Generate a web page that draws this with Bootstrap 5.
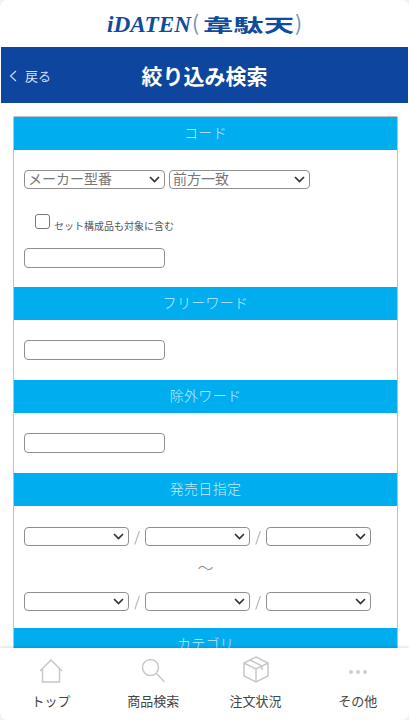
<!DOCTYPE html>
<html lang="ja">
<head>
	<meta charset="utf-8">
	<meta name="viewport" content="width=device-width, initial-scale=1">
	<title>絞り込み検索</title>

	<link href="https://cdn.jsdelivr.net/npm/bootstrap@5.3.3/dist/css/bootstrap.min.css" rel="stylesheet">
	<script src="https://cdn.jsdelivr.net/npm/bootstrap@5.3.3/dist/js/bootstrap.bundle.min.js"></script>

	<style>
		html, body {
			height: 100%;
			overflow: hidden;
		}

		body {
			font-family: "Noto Sans CJK JP", "Liberation Sans", sans-serif;
			background: #f2f2f2;
			color: #555;
		}

		.app-frame {
			height: 720px;
			background: #fff;
			border-radius: 8px;
			overflow: hidden;
		}

		.logo-bar {
			flex: 0 0 47px;
		}

		.logo-latin {
			font-family: "Liberation Serif", serif;
			font-style: italic;
			font-weight: 700;
			font-size: 23px;
			fill: #0f4c9c;
		}

		.logo-kanji {
			font-size: 18px;
			font-weight: 700;
			fill: #0f4c9c;
		}

		.logo-paren {
			font-size: 21px;
			fill: #6d8fc0;
		}

		.title-bar {
			flex: 0 0 56px;
			margin: 0 1px;
			background: #0e459e;
			color: #fff;
		}

		.back-link {
			left: 8px;
			top: 2px;
			bottom: 0;
			font-size: 13px;
			color: #d5dff0;
		}

		.page-title {
			font-size: 21px;
			font-weight: 700;
			padding-top: 2px;
		}

		.scroll-area {
			flex: 1 1 auto;
			min-height: 0;
			overflow: hidden;
			padding: 13px 11px 0 13px;
		}

		.search-panel {
			border: 1px solid #bcc0c4;
			border-bottom: 0;
			border-radius: 2px 2px 0 0;
		}

		.section-head {
			height: 33px;
			padding-bottom: 2px;
			background: #00aeef;
			color: #c4ebfa;
			font-size: 14px;
			font-weight: 300;
			letter-spacing: 0.3px;
		}

		.section-body {
			padding: 20px 10px 0;
		}

		.section-code {
			height: 137px;
		}

		.section-word {
			height: 60px;
		}

		.section-date {
			height: 122px;
		}

		.field-select {
			height: 19px;
			border: 1px solid #8f8f8f;
			border-radius: 4px;
			background: #fff;
			color: #777;
			font-size: 14px;
			line-height: 15px;
			padding: 0 4px 0 3px;
		}

		.field-select span {
			padding-bottom: 2px;
		}

		.field-select svg {
			flex: 0 0 auto;
		}

		.size-maker {
			width: 141px;
		}

		.size-match {
			width: 141px;
		}

		.size-date {
			width: 105px;
		}

		.field-text {
			display: block;
			width: 141px;
			height: 20px;
			border: 1px solid #8f8f8f;
			border-radius: 4px;
			background: #fff;
		}

		.check-row {
			margin-top: 25px;
			margin-bottom: 19px;
			padding-left: 11px;
		}

		.check-box {
			width: 15px;
			height: 15px;
			border: 1px solid #777;
			border-radius: 3px;
		}

		.check-label {
			font-size: 10px;
			line-height: 12px;
			color: #555;
			margin-bottom: -3px;
		}

		.date-sep {
			width: 16px;
			font-size: 14px;
			color: #888;
			font-weight: 300;
		}

		.date-wave {
			height: 44px;
			font-size: 16px;
			line-height: 40px;
			color: #888;
			font-weight: 300;
		}

		.tab-bar {
			flex: 0 0 72px;
			background: #fff;
			box-shadow: 0 -1px 3px rgba(0, 0, 0, 0.14);
		}

		.tab-item {
			flex: 1 1 25%;
			font-size: 13px;
			color: #444;
		}

		.tab-icon {
			height: 35px;
		}

		.tab-label {
			margin-top: 8px;
		}
	</style>
</head>
<body>

	<div class="app-frame d-flex flex-column">
		<header class="logo-bar d-flex align-items-center justify-content-center">
			<svg width="200" height="40" viewBox="0 0 200 40">
				<text class="logo-latin" x="2" y="28" textLength="84" lengthAdjust="spacingAndGlyphs">iDATEN</text>
				<text class="logo-paren" x="87" y="27">(</text>
				<text class="logo-kanji" x="98" y="28" textLength="91" lengthAdjust="spacingAndGlyphs">韋駄天</text>
				<text class="logo-paren" x="190" y="27">)</text>
			</svg>
		</header>

		<div class="title-bar position-relative d-flex align-items-center justify-content-center">
			<a class="back-link position-absolute d-flex align-items-center gap-2 text-decoration-none">
				<svg width="8" height="12" viewBox="0 0 8 12" fill="none" stroke="#d5dff0" stroke-width="1.1"><path d="M7 1 L1.5 6 L7 11"/></svg>
				<span>戻る</span>
			</a>
			<div class="page-title">絞り込み検索</div>
		</div>

		<main class="scroll-area">
			<form class="search-panel">
				<div class="section-head d-flex align-items-center justify-content-center">コード</div>
				<div class="section-body section-code">
					<div class="d-flex gap-1">
						<div class="field-select size-maker d-flex align-items-center justify-content-between">
							<span>メーカー型番</span>
							<svg width="11" height="7" viewBox="0 0 11 7" fill="none" stroke="#333" stroke-width="1.7"><path d="M1 1 L5.5 5.5 L10 1"/></svg>
						</div>
						<div class="field-select size-match d-flex align-items-center justify-content-between">
							<span>前方一致</span>
							<svg width="11" height="7" viewBox="0 0 11 7" fill="none" stroke="#333" stroke-width="1.7"><path d="M1 1 L5.5 5.5 L10 1"/></svg>
						</div>
					</div>
					<div class="check-row d-flex align-items-end gap-1">
						<span class="check-box flex-shrink-0"></span>
						<span class="check-label">セット構成品も対象に含む</span>
					</div>
					<span class="field-text"></span>
				</div>

				<div class="section-head d-flex align-items-center justify-content-center">フリーワード</div>
				<div class="section-body section-word">
					<span class="field-text"></span>
				</div>

				<div class="section-head d-flex align-items-center justify-content-center">除外ワード</div>
				<div class="section-body section-word">
					<span class="field-text"></span>
				</div>

				<div class="section-head d-flex align-items-center justify-content-center">発売日指定</div>
				<div class="section-body section-date">
					<div class="d-flex align-items-center">
						<div class="field-select size-date d-flex align-items-center justify-content-end"><svg width="11" height="7" viewBox="0 0 11 7" fill="none" stroke="#333" stroke-width="1.7"><path d="M1 1 L5.5 5.5 L10 1"/></svg></div>
						<span class="date-sep text-center">/</span>
						<div class="field-select size-date d-flex align-items-center justify-content-end"><svg width="11" height="7" viewBox="0 0 11 7" fill="none" stroke="#333" stroke-width="1.7"><path d="M1 1 L5.5 5.5 L10 1"/></svg></div>
						<span class="date-sep text-center">/</span>
						<div class="field-select size-date d-flex align-items-center justify-content-end"><svg width="11" height="7" viewBox="0 0 11 7" fill="none" stroke="#333" stroke-width="1.7"><path d="M1 1 L5.5 5.5 L10 1"/></svg></div>
					</div>
					<div class="date-wave text-center">～</div>
					<div class="d-flex align-items-center">
						<div class="field-select size-date d-flex align-items-center justify-content-end"><svg width="11" height="7" viewBox="0 0 11 7" fill="none" stroke="#333" stroke-width="1.7"><path d="M1 1 L5.5 5.5 L10 1"/></svg></div>
						<span class="date-sep text-center">/</span>
						<div class="field-select size-date d-flex align-items-center justify-content-end"><svg width="11" height="7" viewBox="0 0 11 7" fill="none" stroke="#333" stroke-width="1.7"><path d="M1 1 L5.5 5.5 L10 1"/></svg></div>
						<span class="date-sep text-center">/</span>
						<div class="field-select size-date d-flex align-items-center justify-content-end"><svg width="11" height="7" viewBox="0 0 11 7" fill="none" stroke="#333" stroke-width="1.7"><path d="M1 1 L5.5 5.5 L10 1"/></svg></div>
					</div>
				</div>

				<div class="section-head d-flex align-items-center justify-content-center">カテゴリ</div>
			</form>
		</main>

		<nav class="tab-bar d-flex position-relative">
			<div class="tab-item d-flex flex-column align-items-center">
				<div class="tab-icon d-flex align-items-end">
					<svg width="24" height="24" viewBox="0 0 24 24" fill="none" stroke="#c8c8c8" stroke-width="1.5"><path d="M1 12 L12 1 L23 12 M3.5 10 V23 H20.5 V10"/></svg>
				</div>
				<span class="tab-label">トップ</span>
			</div>
			<div class="tab-item d-flex flex-column align-items-center">
				<div class="tab-icon d-flex align-items-end">
					<svg width="24" height="25" viewBox="0 0 24 25" fill="none" stroke="#c8c8c8" stroke-width="1.5"><circle cx="9.5" cy="9.5" r="8"/><path d="M15.5 15.5 L23.5 24"/></svg>
				</div>
				<span class="tab-label">商品検索</span>
			</div>
			<div class="tab-item d-flex flex-column align-items-center">
				<div class="tab-icon d-flex align-items-end">
					<svg width="26" height="27" viewBox="0 0 26 27" fill="none" stroke="#c8c8c8" stroke-width="1.5"><path d="M13 1 L25 7 V20 L13 26 L1 20 V7 Z M1 7 L13 13 L25 7 M13 13 V26 M7 4 L19 10 V14"/></svg>
				</div>
				<span class="tab-label">注文状況</span>
			</div>
			<div class="tab-item d-flex flex-column align-items-center">
				<div class="tab-icon d-flex align-items-end">
					<svg class="mb-2" width="20" height="6" viewBox="0 0 20 6" fill="#cfcfcf"><circle cx="3" cy="3" r="2"/><circle cx="10" cy="3" r="2"/><circle cx="17" cy="3" r="2"/></svg>
				</div>
				<span class="tab-label">その他</span>
			</div>
		</nav>
	</div>

</body>
</html>
